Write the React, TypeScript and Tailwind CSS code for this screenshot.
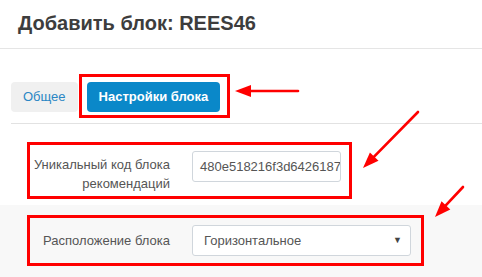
import React from 'react'

// arrowhead triangle pointing at (x2, y2), coming from (x1, y1)
function arrowHead(x1: number, y1: number, x2: number, y2: number, len = 16, half = 6) {
    const dx = x2 - x1
    const dy = y2 - y1
    const d = Math.hypot(dx, dy)
    const ux = dx / d
    const uy = dy / d
    const bx = x2 - ux * len
    const by = y2 - uy * len
    return `${x2},${y2} ${bx - uy * half},${by + ux * half} ${bx + uy * half},${by - ux * half}`
}

const arrows = [
    { x1: 298, y1: 91, x2: 235, y2: 91 },
    { x1: 418, y1: 112, x2: 363, y2: 168 },
    { x1: 463, y1: 187, x2: 435, y2: 217 },
]

function Annotations() {
    return (
        <svg className="absolute inset-0 pointer-events-none" width={482} height={277} viewBox="0 0 482 277">
            {arrows.map((a, i) => {
                const d = Math.hypot(a.x2 - a.x1, a.y2 - a.y1)
                const ex = a.x2 - ((a.x2 - a.x1) / d) * 12
                const ey = a.y2 - ((a.y2 - a.y1) / d) * 12
                return (
                    <g key={i}>
                        <line x1={a.x1} y1={a.y1} x2={ex} y2={ey} stroke="#ff0000" strokeWidth={2.6} strokeLinecap="round" />
                        <polygon points={arrowHead(a.x1, a.y1, a.x2, a.y2)} fill="#ff0000" />
                    </g>
                )
            })}
        </svg>
    )
}

export default function App() {
    return (
        <div className="relative w-[482px] h-[277px] overflow-hidden bg-white font-['Liberation_Sans',Arial,sans-serif]">
            {/* header */}
            <div className="h-[49px] pl-[18px] pt-[10px] border-b border-[#e5e5e5]">
                <h1 className="text-[20px] leading-[26px] font-bold text-[#3d3d3d]">Добавить блок: REES46</h1>
            </div>

            {/* tabs */}
            <div className="ml-[11px] pt-[33px] pb-[11px] border-b border-[#e2e2e2] flex">
                <div className="h-[30px] px-[12px] flex items-center rounded-[4px] bg-[#f0f0f0] text-[13px] text-[#2a86c4]">
                    Общее
                </div>
                <div className="relative ml-[9px]">
                    <div className="h-[30px] px-[12px] flex items-center rounded-[4px] bg-[#0a88c9] text-[13px] font-bold text-white">
                        Настройки блока
                    </div>
                    <span className="absolute left-[-8px] right-[-10px] top-[-8px] bottom-[-6px] border-[3px] border-[#ff0000]" />
                </div>
            </div>

            {/* form */}
            <div className="relative flex pt-[27px] h-[81px]">
                <div className="w-[170px] pt-[4px] text-right text-[13px] leading-[19px] text-[#555]">
                    Уникальный код блока
                    <br />
                    рекомендаций
                </div>
                <div className="ml-[22px] w-[149px] h-[31px] px-[7px] flex items-center border border-[#d0d6dc] rounded-[3px] overflow-hidden whitespace-nowrap text-[13px] text-[#555]">
                    480e518216f3d642618729
                </div>
                <span className="absolute left-[27px] top-[18px] w-[325px] h-[57px] border-[3px] border-[#ff0000]" />
            </div>

            <div className="relative flex pt-[20px] h-[72px] bg-[#f8f8f8]">
                <div className="w-[170px] h-[31px] flex items-center justify-end text-[13px] text-[#555]">
                    Расположение блока
                </div>
                <div className="ml-[22px] w-[219px] h-[31px] pl-[11px] pr-[8px] flex items-center justify-between bg-white border border-[#d0d6dc] rounded-[3px] text-[13px] text-[#555]">
                    <span>Горизонтальное</span>
                    <span className="text-[9px] text-[#444]">▼</span>
                </div>
                <span className="absolute left-[27px] top-[10px] w-[397px] h-[51px] border-[3px] border-[#ff0000]" />
            </div>

            <Annotations />
        </div>
    )
}
